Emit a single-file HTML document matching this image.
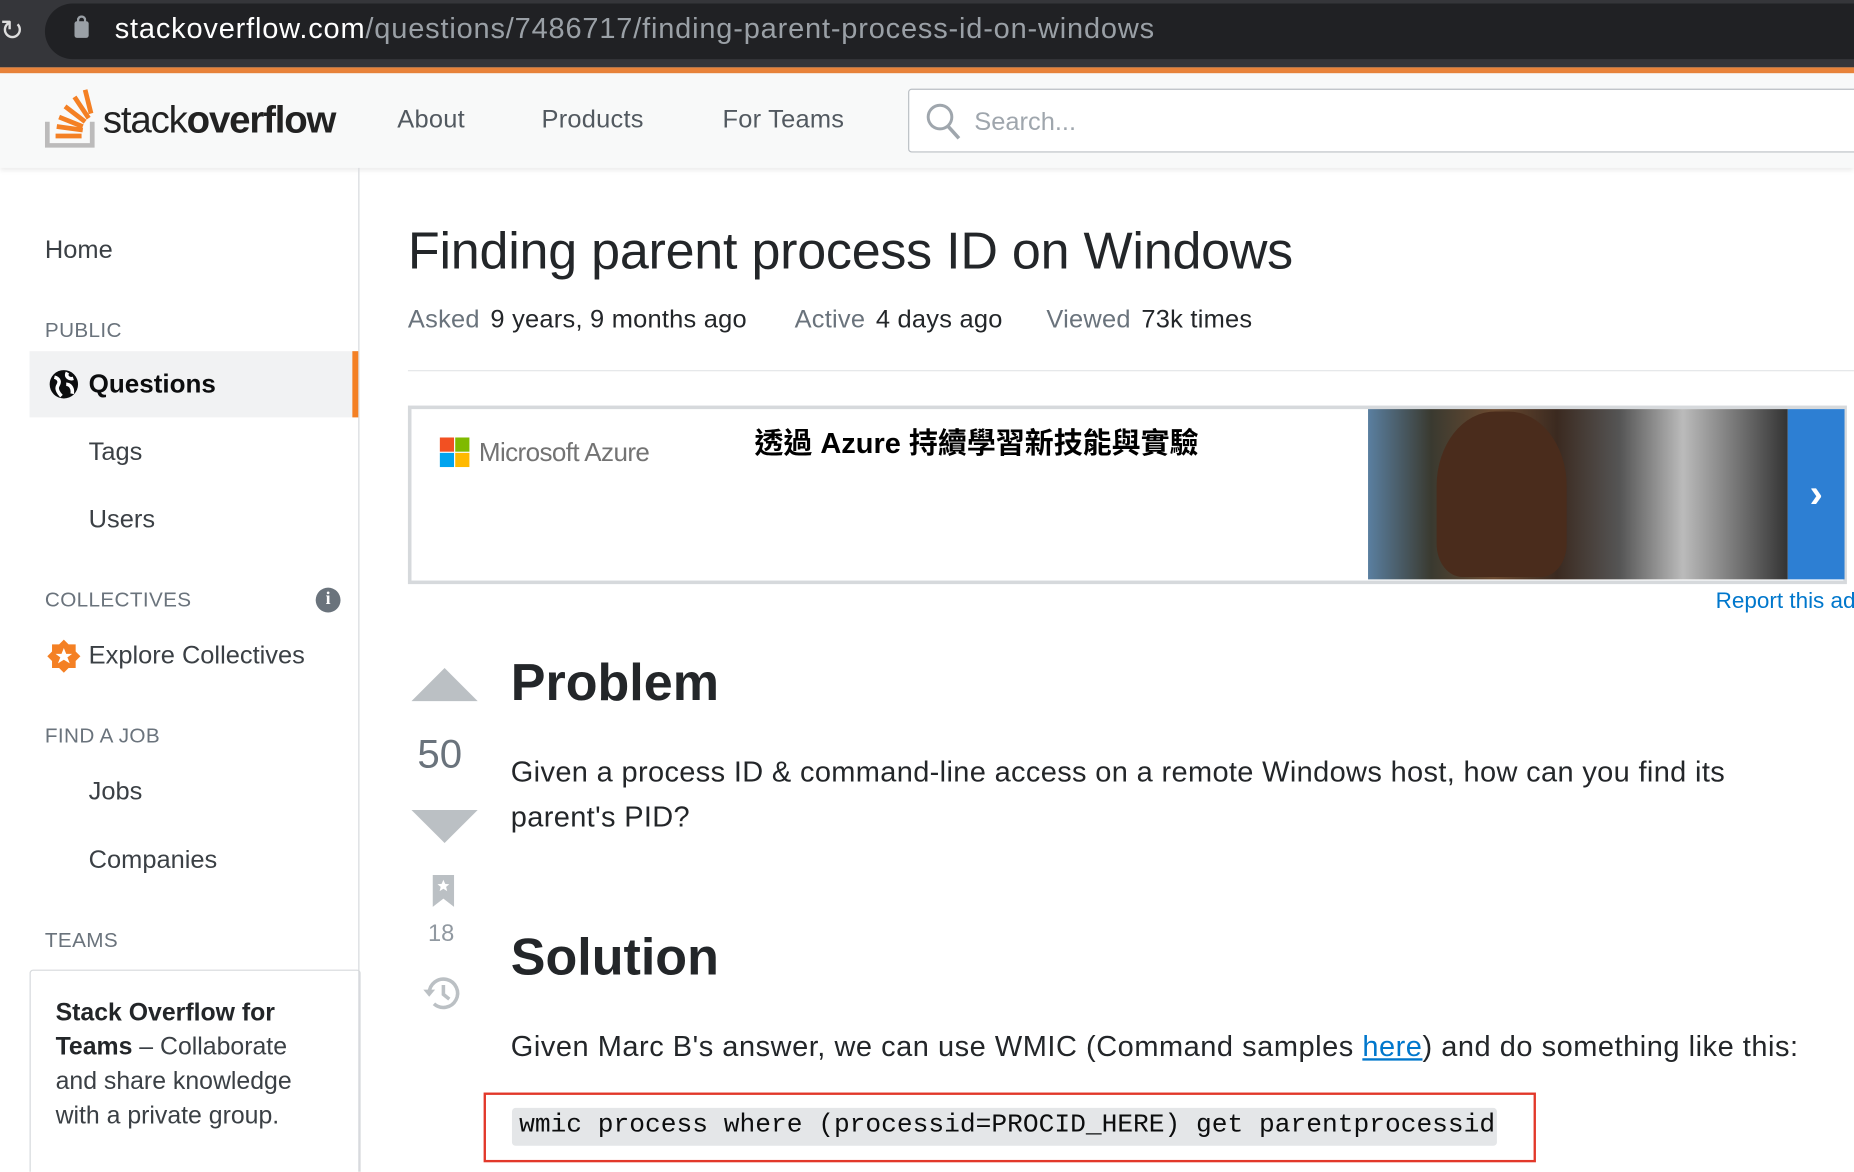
<!DOCTYPE html>
<html><head><meta charset="utf-8"><style>
*{margin:0;padding:0;box-sizing:border-box}
html,body{width:1854px;height:1172px;overflow:hidden;background:#fff}
#w{position:absolute;left:0;top:0;width:1568px;height:991px;transform:scale(1.18240);transform-origin:0 0;font-family:"Liberation Sans","Noto Sans CJK TC",sans-serif;overflow:hidden}
.a{position:absolute;white-space:nowrap}
.nav{font-size:21.5px;color:#525960;top:89px;letter-spacing:.2px}
.sb{font-size:21.5px;color:#3b4045}
.cap{font-size:17.5px;color:#6a737c;letter-spacing:.3px}
.meta{top:258px;font-size:21.5px;color:#232629;letter-spacing:.2px}
.meta span{color:#6a737c;margin-right:9px}
</style></head><body><div id="w">
<div class="a" style="left:0;top:0;width:1568px;height:57px;background:#35363a"></div>
<div class="a" style="left:38px;top:3px;width:1560px;height:47px;background:#202124;border-radius:24px"></div>
<div class="a" style="left:0;top:12px;font-size:24px;color:#ddd">↻</div>
<div class="a" style="left:63px;top:18px;width:12px;height:14px;background:#9aa0a6;border-radius:2px"></div>
<div class="a" style="left:65px;top:13px;width:8px;height:8px;border:2px solid #9aa0a6;border-bottom:none;border-radius:4px 4px 0 0"></div>
<div class="a" style="left:97px;top:11px;font-size:24.5px;letter-spacing:.7px;color:#fff">stackoverflow.com<span style="color:#9aa0a6">/questions/7486717/finding-parent-process-id-on-windows</span></div>
<div class="a" style="left:0;top:57px;width:1568px;height:5px;background:#e8833a"></div>
<div class="a" style="left:0;top:62px;width:1568px;height:80px;background:#f8f9f9;box-shadow:0 2px 4px rgba(0,0,0,.08)"></div>
<svg class="a" style="left:38px;top:73px" width="44" height="52" viewBox="0 0 44 52"><path d="M2 30v20h38V30" fill="none" stroke="#bcbbbb" stroke-width="4"/><g stroke="#f48024" stroke-width="4"><path d="M9 42h22M10 34l22 3M12 26l20 8M17 17l17 13M25 9l12 18M34 3l5 20"/></g></svg>
<div class="a" style="left:87px;top:83px;font-size:32.5px;color:#222;letter-spacing:-1px">stack<b>overflow</b></div>
<div class="a nav" style="left:336px">About</div>
<div class="a nav" style="left:458px">Products</div>
<div class="a nav" style="left:611px">For Teams</div>
<div class="a" style="left:768px;top:75px;width:820px;height:54px;background:#fff;border:1px solid #babfc4;border-radius:3px"></div>
<svg class="a" style="left:782px;top:86px" width="32" height="34"><circle cx="13" cy="13" r="10" fill="none" stroke="#9fa6ad" stroke-width="2.5"/><path d="M20 21l9 10" stroke="#9fa6ad" stroke-width="3"/></svg>
<div class="a" style="left:824px;top:91px;font-size:21.5px;color:#9fa6ad">Search...</div>
<div class="a" style="left:303px;top:142px;width:1px;height:860px;background:#d6d9dc"></div>
<div class="a sb" style="left:38px;top:199px">Home</div>
<div class="a cap" style="left:38px;top:269px">PUBLIC</div>
<div class="a" style="left:25px;top:297px;width:278px;height:56px;background:#f1f2f3;border-right:5px solid #f48024"></div>
<svg class="a" style="left:40px;top:311px" width="28" height="28"><circle cx="14" cy="14" r="12" fill="#0c0d0e"/><path d="M6 8c4 1 5 4 3 7s1 7 3 9M17 4c-2 4 2 6 5 5M16 14c3 0 6 3 5 8" stroke="#fff" stroke-width="3" fill="none"/></svg>
<div class="a" style="left:75px;top:312px;font-size:22px;font-weight:bold;color:#0c0d0e">Questions</div>
<div class="a sb" style="left:75px;top:370px">Tags</div>
<div class="a sb" style="left:75px;top:427px">Users</div>
<div class="a cap" style="left:38px;top:497px">COLLECTIVES</div>
<div class="a" style="left:267px;top:497px;width:21px;height:21px;border-radius:50%;background:#6a737c;color:#fff;font-size:15px;font-weight:bold;text-align:center;line-height:21px;font-family:'Liberation Serif',serif">i</div>
<svg class="a" style="left:39px;top:540px" width="30" height="30" viewBox="0 0 30 30"><path d="M15 1l4 4h6v6l4 4-4 4v6h-6l-4 4-4-4H5v-6l-4-4 4-4V5h6z" fill="#f48024"/><path d="M15 8l2 5h5l-4 3 2 5-5-3-5 3 2-5-4-3h5z" fill="#fff"/></svg>
<div class="a sb" style="left:75px;top:542px">Explore Collectives</div>
<div class="a cap" style="left:38px;top:612px">FIND A JOB</div>
<div class="a sb" style="left:75px;top:657px">Jobs</div>
<div class="a sb" style="left:75px;top:715px">Companies</div>
<div class="a cap" style="left:38px;top:785px">TEAMS</div>
<div class="a" style="left:25px;top:820px;width:280px;height:200px;border:1px solid #d6d9dc;border-radius:3px"></div>
<div class="a" style="left:47px;top:842px;font-size:21px;line-height:29px;color:#3b4045;white-space:normal;width:225px"><b style="color:#232629">Stack Overflow for Teams</b> – Collaborate and share knowledge with a private group.</div>
<div class="a" style="left:345px;top:188px;font-size:44px;color:#232629;letter-spacing:-.2px">Finding parent process ID on Windows</div>
<div class="a meta" style="left:345px"><span>Asked</span>9 years, 9 months ago</div>
<div class="a meta" style="left:672px"><span>Active</span>4 days ago</div>
<div class="a meta" style="left:885px"><span>Viewed</span>73k times</div>
<div class="a" style="left:345px;top:313px;width:1230px;height:1px;background:#e4e6e8"></div>
<div class="a" style="left:345px;top:343px;width:1217px;height:151px;border:3px solid #d6d9dc;background:#fff"></div>
<div class="a" style="left:372px;top:370px;width:12px;height:12px;background:#f25022"></div>
<div class="a" style="left:385px;top:370px;width:12px;height:12px;background:#7fba00"></div>
<div class="a" style="left:372px;top:383px;width:12px;height:12px;background:#00a4ef"></div>
<div class="a" style="left:385px;top:383px;width:12px;height:12px;background:#ffb900"></div>
<div class="a" style="left:405px;top:370px;font-size:22px;color:#737373;letter-spacing:-.5px">Microsoft Azure</div>
<div class="a" style="left:638px;top:356px;font-size:24.5px;font-weight:bold;color:#000">透過 Azure 持續學習新技能與實驗</div>
<div class="a" style="left:1157px;top:346px;width:355px;height:144px;background:linear-gradient(90deg,#5a7fa0 0%,#3a3a30 15%,#6b4a30 30%,#3b2a20 45%,#555 60%,#bbb 75%,#333 100%)"></div>
<div class="a" style="left:1215px;top:348px;width:110px;height:140px;border-radius:45% 45% 20% 20%;background:#4a2c1c"></div>
<div class="a" style="left:1512px;top:346px;width:48px;height:144px;background:#2d7fd3;color:#fff;font-size:34px;font-weight:bold;text-align:center;line-height:144px">›</div>
<div class="a" style="left:1451px;top:498px;font-size:19px;color:#0077cc">Report this ad</div>
<svg class="a" style="left:346px;top:562px" width="60" height="155"><path d="M2 31h56L30 3z" fill="#bbc0c4"/><path d="M2 123h56L30 151z" fill="#bbc0c4"/></svg>
<div class="a" style="left:353px;top:619px;font-size:34px;color:#6a737c">50</div>
<svg class="a" style="left:364px;top:739px" width="22" height="30"><path d="M2 1h18v27l-9-7-9 7z" fill="#bbc0c4"/><path d="M11 5l1.5 3.5 3.5.3-2.7 2.3.9 3.6-3.2-2-3.2 2 .9-3.6-2.7-2.3 3.5-.3z" fill="#fff"/></svg>
<div class="a" style="left:362px;top:779px;font-size:20px;color:#9199a1">18</div>
<svg class="a" style="left:357px;top:824px" width="34" height="32"><path d="M6 16a12 12 0 1 1 4 9" fill="none" stroke="#bbc0c4" stroke-width="3"/><path d="M1 13l5 6 5-6z" fill="#bbc0c4"/><path d="M18 9v8l5 4" fill="none" stroke="#bbc0c4" stroke-width="3"/></svg>
<div class="a" style="left:432px;top:553px;font-size:44px;font-weight:bold;color:#232629">Problem</div>
<div class="a" style="left:432px;top:635px;font-size:24.5px;line-height:38px;letter-spacing:.3px;color:#232629;white-space:normal;width:1080px">Given a process ID &amp; command-line access on a remote Windows host, how can you find its parent's PID?</div>
<div class="a" style="left:432px;top:785px;font-size:44px;font-weight:bold;color:#232629">Solution</div>
<div class="a" style="left:432px;top:872px;font-size:24.5px;letter-spacing:.45px;color:#232629">Given Marc B's answer, we can use WMIC (Command samples <span style="color:#0077cc;text-decoration:underline">here</span>) and do something like this:</div>
<div class="a" style="left:409px;top:924px;width:890px;height:59px;border:2px solid #e2382a"></div>
<div class="a" style="left:433px;top:937px;width:833px;height:32px;background:#e4e6e8;border-radius:3px"></div>
<div class="a" style="left:439px;top:939px;font-family:'Liberation Mono',monospace;font-size:22.2px;color:#0c0d0e">wmic process where (processid=PROCID_HERE) get parentprocessid</div>
</div></body></html>
